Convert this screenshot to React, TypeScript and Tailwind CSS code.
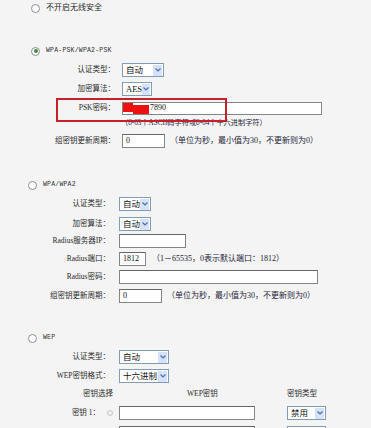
import React from 'react';

const font = { fontFamily: '"Liberation Serif","Noto Sans CJK SC",serif' };

function Radio({ checked = false }: { checked?: boolean }) {
  return (
    <span className="w-[9px] h-[9px] rounded-full border border-[#8a8f96] bg-white flex items-center justify-center shrink-0">
      {checked && <span className="w-[4px] h-[4px] rounded-full bg-[#3b8a3b]" />}
    </span>
  );
}

function Select({ value, width }: { value: string; width: string }) {
  return (
    <div className={`${width} h-[14px] border border-[#7f9db9] bg-white flex items-center justify-between shrink-0`}>
      <span className="pl-[3px] text-[8.5px] leading-none text-[#111]">{value}</span>
      <span className="w-[9px] h-[11px] mr-[1px] bg-[#d6e2fa] flex items-center justify-center">
        <svg width="6" height="4" viewBox="0 0 6 4">
          <path d="M0.5 0.5 L3 3 L5.5 0.5" fill="none" stroke="#4d6fae" strokeWidth="1.2" />
        </svg>
      </span>
    </div>
  );
}

function Input({ width, value = '' }: { width: string; value?: string }) {
  return (
    <div className={`${width} h-[14px] border border-[#858585] border-t-[#666] bg-white flex items-center shrink-0`}>
      <span className="pl-[3px] text-[8px] leading-none text-[#111]">{value}</span>
    </div>
  );
}

function Row({ label, labelW, gap, mt, children }: { label: string; labelW: string; gap: string; mt: string; children: React.ReactNode }) {
  return (
    <div className={`h-[14px] flex items-center ${mt}`}>
      <span className={`${labelW} ${gap} text-right text-[7.5px] leading-none text-[#2a2a2a] shrink-0 whitespace-nowrap`}>{label}</span>
      {children}
    </div>
  );
}

function Hint({ children, ml, size = 'text-[8px]' }: { children: React.ReactNode; ml: string; size?: string }) {
  return <span className={`${ml} ${size} leading-none text-[#1e2538] whitespace-nowrap`}>{children}</span>;
}

function Title({ text, pl, mt }: { text: string; pl: string; mt: string }) {
  return (
    <div className={`h-[12px] flex items-center ${pl} ${mt}`}>
      <Radio checked={text === 'WPA-PSK/WPA2-PSK'} />
      <span
        className="ml-[6px] leading-none text-[#333] whitespace-nowrap text-[6.5px] tracking-[0.2px]"
        style={{ fontFamily: '"Liberation Mono","Noto Sans CJK SC",monospace' }}
      >
        {text}
      </span>
    </div>
  );
}

export default function App() {
  return (
    <div className="w-[371px] h-[428px] overflow-hidden bg-[#f4f4f4] relative" style={font}>
      <div className="flex flex-col pt-[2px]">
        <div className="h-[12px] flex items-center pl-[31px]">
          <Radio />
          <span className="ml-[6px] text-[8px] leading-none text-[#2a2a2a]">不开启无线安全</span>
        </div>

        {/* WPA-PSK/WPA2-PSK */}
        <Title text="WPA-PSK/WPA2-PSK" pl="pl-[31px]" mt="mt-[31px]" />
        <Row label="认证类型：" labelW="w-[115px]" gap="mr-[7px]" mt="mt-[6px]">
          <Select value="自动" width="w-[42px]" />
        </Row>
        <Row label="加密算法：" labelW="w-[115px]" gap="mr-[7px]" mt="mt-[5px]">
          <Select value="AES" width="w-[30px]" />
        </Row>
        <Row label="PSK密码：" labelW="w-[115px]" gap="mr-[7px]" mt="mt-[5px]">
          <div className="w-[200px] h-[13px] border border-[#858585] bg-white flex items-center shrink-0">
            <span className="w-[10px] h-[9px] bg-[#ee1111] self-start" />
            <span className="w-[16px] h-[9px] bg-[#ee1111] self-end" />
            <span className="text-[8px] leading-none text-[#111] ml-[1px]">7890</span>
          </div>
        </Row>
        <div className="h-[12px] flex items-center mt-[3px] pl-[121px]">
          <Hint ml="ml-0" size="text-[7.2px]">（8-63个ASCII码字符或8-64个十六进制字符）</Hint>
        </div>
        <Row label="组密钥更新周期：" labelW="w-[115px]" gap="mr-[7px]" mt="mt-[4px]">
          <Input width="w-[43px]" value="0" />
          <Hint ml="ml-[5px]">（单位为秒，最小值为30，不更新则为0）</Hint>
        </Row>

        {/* WPA/WPA2 */}
        <Title text="WPA/WPA2" pl="pl-[28px]" mt="mt-[31px]" />
        <Row label="认证类型：" labelW="w-[110px]" gap="mr-[9px]" mt="mt-[6px]">
          <Select value="自动" width="w-[32px]" />
        </Row>
        <Row label="加密算法：" labelW="w-[110px]" gap="mr-[9px]" mt="mt-[6px]">
          <Select value="自动" width="w-[32px]" />
        </Row>
        <Row label="Radius服务器IP：" labelW="w-[110px]" gap="mr-[9px]" mt="mt-[3px]">
          <Input width="w-[67px]" />
        </Row>
        <Row label="Radius端口：" labelW="w-[110px]" gap="mr-[9px]" mt="mt-[4px]">
          <Input width="w-[27px]" value="1812" />
          <Hint ml="ml-[6px]">（1－65535，0表示默认端口：1812）</Hint>
        </Row>
        <Row label="Radius密码：" labelW="w-[110px]" gap="mr-[9px]" mt="mt-[4px]">
          <Input width="w-[199px]" />
        </Row>
        <Row label="组密钥更新周期：" labelW="w-[110px]" gap="mr-[9px]" mt="mt-[5px]">
          <Input width="w-[43px]" value="0" />
          <Hint ml="ml-[5px]">（单位为秒，最小值为30，不更新则为0）</Hint>
        </Row>

        {/* WEP */}
        <Title text="WEP" pl="pl-[28px]" mt="mt-[29px]" />
        <Row label="认证类型：" labelW="w-[110px]" gap="mr-[9px]" mt="mt-[6px]">
          <Select value="自动" width="w-[50px]" />
        </Row>
        <Row label="WEP密钥格式：" labelW="w-[110px]" gap="mr-[9px]" mt="mt-[5px]">
          <Select value="十六进制" width="w-[50px]" />
        </Row>
        <div className="h-[12px] flex items-center mt-[5px] text-[7.5px] leading-none text-[#2a2a2a]">
          <span className="w-[83px]" />
          <span className="w-[104px]">密钥选择</span>
          <span className="w-[100px]">WEP密钥</span>
          <span>密钥类型</span>
        </div>
        <div className="h-[14px] flex items-center mt-[6px]">
          <span className="w-[100px] text-right text-[7.5px] leading-none text-[#2a2a2a] shrink-0">密钥 1：</span>
          <span className="w-[19px] flex justify-center shrink-0">
            <span className="w-[6px] h-[6px] rounded-full border border-[#c9c9c9] bg-[#f0f0f0]" />
          </span>
          <Input width="w-[136px]" />
          <span className="w-[32px] shrink-0" />
          <Select value="禁用" width="w-[39px]" />
        </div>
        <div className="h-[14px] flex items-center mt-[6px]">
          <span className="w-[119px] shrink-0" />
          <Input width="w-[136px]" />
          <span className="w-[32px] shrink-0" />
          <Select value="" width="w-[39px]" />
        </div>
      </div>

      {/* red annotation box */}
      <div className="absolute left-[56px] top-[98px] w-[171px] h-[24px] border-2 border-[#c8202a]" />
    </div>
  );
}
